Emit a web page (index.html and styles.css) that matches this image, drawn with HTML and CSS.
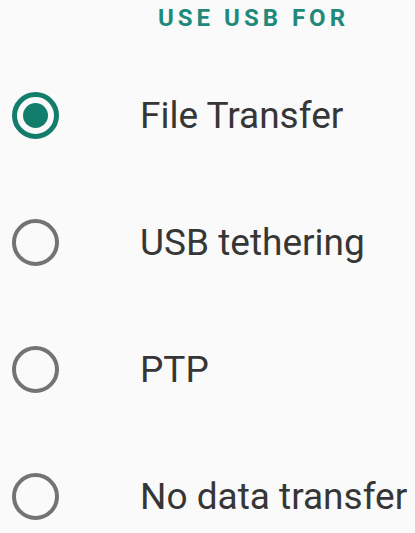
FILE: index.html
```html
<!DOCTYPE html>
<html lang="en">
<head>
    <meta charset="UTF-8">
    <title>Use USB for</title>
    <link rel="stylesheet" href="styles.css">
</head>
<body>
    <div class="usb-dialog">
        <h2 class="usb-title">USE USB FOR</h2>
        <ul class="usb-options">
            <li class="usb-option checked">
                <span class="radio"></span>
                <span class="label">File Transfer</span>
            </li>
            <li class="usb-option">
                <span class="radio"></span>
                <span class="label">USB tethering</span>
            </li>
            <li class="usb-option">
                <span class="radio"></span>
                <span class="label">PTP</span>
            </li>
            <li class="usb-option">
                <span class="radio"></span>
                <span class="label">No data transfer</span>
            </li>
        </ul>
    </div>
</body>
</html>
```

FILE: styles.css
```css
* {
    box-sizing: border-box;
}

body {
    margin: 0;
    font-family: Roboto, "Noto Sans", sans-serif;
    background: #fafafa;
    color: #333;
    height: 100vh;
    overflow: hidden;
}

.usb-dialog {
    width: 100%;
}

.usb-title {
    margin: 0;
    padding: 4px 0 0 158px;
    height: 52px;
    font-size: 24px;
    font-weight: 700;
    letter-spacing: 4px;
    color: #1f8a7b;
}

.usb-options {
    list-style: none;
    margin: 0;
    padding: 0;
}

.usb-option {
    display: flex;
    align-items: center;
    height: 127px;
    padding-left: 12px;
}

.radio {
    width: 47px;
    height: 47px;
    border: 4.5px solid #737373;
    border-radius: 50%;
    display: flex;
    align-items: center;
    justify-content: center;
    flex-shrink: 0;
}

.usb-option.checked .radio {
    border-width: 5px;
    border-color: #137d6c;
}

.usb-option.checked .radio::after {
    content: "";
    width: 25px;
    height: 25px;
    border-radius: 50%;
    background: #137d6c;
}

.label {
    margin-left: 81px;
    font-size: 37px;
    white-space: nowrap;
    color: #363636;
}
```
